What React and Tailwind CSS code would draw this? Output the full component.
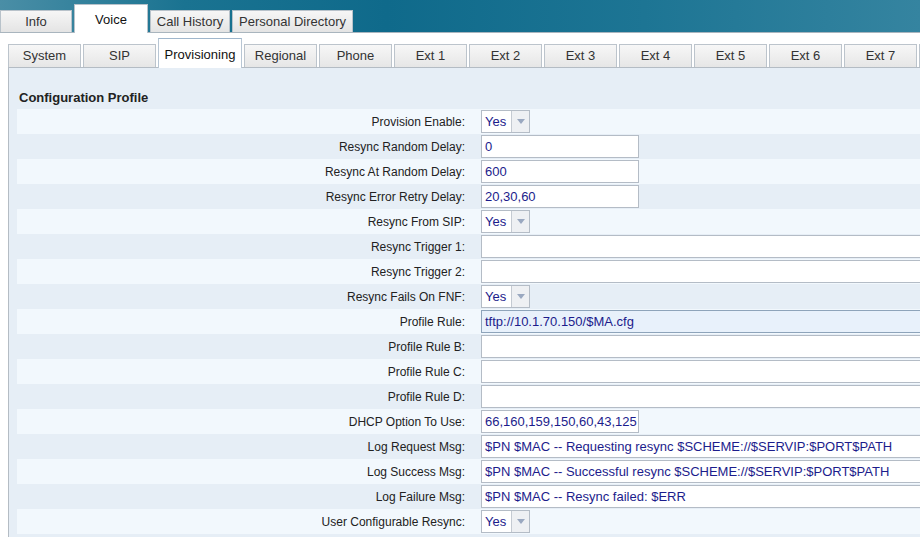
import React from "react";

const mainTabs = [
  { label: "Info", w: "w-[72px]" },
  { label: "Voice", w: "w-[74px]", active: true },
  { label: "Call History", w: "w-[80px]" },
  { label: "Personal Directory", w: "w-[121px]" },
];

const subTabs = ["System", "SIP", "Provisioning", "Regional", "Phone", "Ext 1", "Ext 2", "Ext 3", "Ext 4", "Ext 5", "Ext 6", "Ext 7", ""];

const rows = [
  { label: "Provision Enable:", type: "select", value: "Yes" },
  { label: "Resync Random Delay:", type: "short", value: "0" },
  { label: "Resync At Random Delay:", type: "short", value: "600" },
  { label: "Resync Error Retry Delay:", type: "short", value: "20,30,60" },
  { label: "Resync From SIP:", type: "select", value: "Yes" },
  { label: "Resync Trigger 1:", type: "long", value: "" },
  { label: "Resync Trigger 2:", type: "long", value: "" },
  { label: "Resync Fails On FNF:", type: "select", value: "Yes" },
  { label: "Profile Rule:", type: "long", value: "tftp://10.1.70.150/$MA.cfg", focus: true },
  { label: "Profile Rule B:", type: "long", value: "" },
  { label: "Profile Rule C:", type: "long", value: "" },
  { label: "Profile Rule D:", type: "long", value: "" },
  { label: "DHCP Option To Use:", type: "short", value: "66,160,159,150,60,43,125" },
  { label: "Log Request Msg:", type: "long", value: "$PN $MAC -- Requesting resync $SCHEME://$SERVIP:$PORT$PATH" },
  { label: "Log Success Msg:", type: "long", value: "$PN $MAC -- Successful resync $SCHEME://$SERVIP:$PORT$PATH" },
  { label: "Log Failure Msg:", type: "long", value: "$PN $MAC -- Resync failed: $ERR" },
  { label: "User Configurable Resync:", type: "select", value: "Yes" },
];

function Field({ row }) {
  if (row.type === "select") {
    return (
      <div className="flex h-[23px] w-[49px] border border-[#b4bcc6] bg-white">
        <span className="flex-1 pl-[3px] leading-[21px] text-[#1c1c8c]">{row.value}</span>
        <span className="flex w-[18px] items-center justify-center border-l border-[#c4cad2] bg-[#eef0f3]">
          <svg width="8" height="5" viewBox="0 0 8 5"><path d="M0 0h8L4 5z" fill="#9aa8c0" /></svg>
        </span>
      </div>
    );
  }
  const w = row.type === "short" ? "w-[158px]" : "w-[460px]";
  const bg = row.focus ? "bg-[#e8f1fb] border-[#8ea4ba]" : "bg-white border-[#b4bcc6]";
  return (
    <div className={`h-[23px] ${w} shrink-0 border ${bg} pl-[3px] leading-[21px] text-[#1c1c8c] whitespace-nowrap overflow-hidden`}>
      {row.value}
    </div>
  );
}

export default function App() {
  return (
    <div className="h-[538px] w-[920px] overflow-hidden bg-white text-[13px] text-[#222] font-['Liberation_Sans',Arial,sans-serif]">
      {/* top band with main tabs */}
      <div className="flex h-[33px] items-end gap-[2px] border-b border-[#a9b5be] bg-[linear-gradient(90deg,#4a8ea6_0%,#1a7391_20%,#0f6a8b_42%,#1d7594_70%,#3584a0_100%)]">
        {mainTabs.map((t) =>
          t.active ? (
            <div key={t.label} className={`${t.w} -mb-px flex h-[29px] items-center justify-center border border-b-0 border-[#b8c2ca] bg-white pt-[2px] text-[#111]`}>
              {t.label}
            </div>
          ) : (
            <div key={t.label} className={`${t.w} flex h-[22px] items-center justify-center border border-b-0 border-[#b8c2ca] bg-[linear-gradient(#f6f6f6,#e4e4e4)] text-[#333]`}>
              {t.label}
            </div>
          )
        )}
      </div>

      {/* sub tabs */}
      <div className="flex h-[34px] items-end gap-[2px] pl-[8px]">
        {subTabs.map((t, i) =>
          t === "Provisioning" ? (
            <div key={t} className="-mb-px flex h-[30px] w-[84px] shrink-0 items-center justify-center border border-b-0 border-[#b8c6d4] border-t-[#9fb6cc] bg-white pt-[2px] text-[#111]">
              {t}
            </div>
          ) : (
            <div key={i} className="flex h-[23px] w-[73px] shrink-0 items-center justify-center border border-b-0 border-[#bcc4cc] bg-[linear-gradient(#f7f7f7,#e6e6e6)] text-[#333]">
              {t}
            </div>
          )
        )}
      </div>

      {/* content panel */}
      <div className="ml-[8px] h-[470px] border-l border-t border-[#b4bcc4] bg-[#e6eef6] pl-[8px] pt-[20px]">
        <div className="h-[21px] pl-[2px] font-bold text-[#222]">Configuration Profile</div>
        <div>
          {rows.map((r, i) => (
            <div key={r.label} className={`flex h-[25px] items-center ${i % 2 === 0 ? "bg-[#f2f8fd]" : "bg-[#e6eef6]"}`}>
              <div className="w-[456px] shrink-0 pr-[8px] text-right text-[12px]">{r.label}</div>
              <div className="pl-[8px]">
                <Field row={r} />
              </div>
            </div>
          ))}
        </div>
      </div>
    </div>
  );
}
